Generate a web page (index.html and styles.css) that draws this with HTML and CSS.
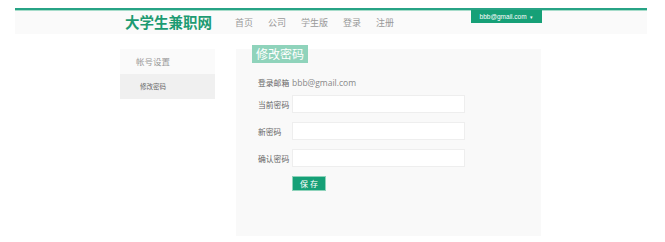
FILE: index.html
```html
<!DOCTYPE html>
<html lang="zh-CN">
  <head>
    <meta charset="utf-8">
    <title>修改密码 - 大学生兼职网</title>
    <link rel="stylesheet" href="styles.css">
  </head>
  <body>
    <div class="header">
      <a class="logo" href="#">大学生兼职网</a>
      <ul class="nav">
        <li><a href="#">首页</a></li>
        <li><a href="#">公司</a></li>
        <li><a href="#">学生版</a></li>
        <li><a href="#">登录</a></li>
        <li><a href="#">注册</a></li>
      </ul>
      <a class="user-btn" href="#">bbb@gmail.com <span class="caret">▾</span></a>
    </div>

    <div class="content">
      <div class="sidebar">
        <div class="side-title">帐号设置</div>
        <a class="side-item active" href="#">修改密码</a>
      </div>

      <div class="panel">
        <div class="panel-tab">修改密码</div>
        <form class="pw-form">
          <div class="form-row first">
            <label>登录邮箱</label>
            <span class="value">bbb@gmail.com</span>
          </div>
          <div class="form-row">
            <label>当前密码</label>
            <input type="password" class="form-control">
          </div>
          <div class="form-row">
            <label>新密码</label>
            <input type="password" class="form-control">
          </div>
          <div class="form-row">
            <label>确认密码</label>
            <input type="password" class="form-control">
          </div>
          <div class="form-row">
            <label></label>
            <button type="submit" class="btn-save">保 存</button>
          </div>
        </form>
      </div>
    </div>
  </body>
</html>
```

FILE: styles.css
```css
body {
  margin: 0;
  background: #fff;
  font-family: "Noto Sans CJK SC", "Noto Sans", sans-serif;
  color: #666;
}
a {
  text-decoration: none;
}
.header {
  display: flex;
  align-items: center;
  height: 24px;
  margin: 8px 18px 0 15px;
  border-top: 2px solid #27a385;
  box-shadow: inset 0 1px 0 #a6dcca;
  background: #fafafa;
}
.logo {
  margin-left: 110px;
  font-size: 14.5px;
  font-weight: bold;
  line-height: 1;
  color: #1d9b72;
}
.nav {
  display: flex;
  list-style: none;
  margin: 0 0 0 23px;
  padding: 0;
  gap: 15px;
  font-size: 9px;
  line-height: 1;
}
.nav a {
  color: #999;
}
.user-btn {
  align-self: flex-start;
  margin-left: auto;
  margin-right: 105px;
  width: 71px;
  height: 13px;
  line-height: 13px;
  text-align: center;
  font-family: "Liberation Sans", sans-serif;
  font-size: 6.5px;
  color: #fff;
  background: #16a077;
}
.caret {
  font-size: 5px;
  margin-left: 2px;
}
.content {
  display: flex;
  align-items: flex-start;
  margin: 15px 0 0 120px;
}
.sidebar {
  width: 95px;
  background: #fafafa;
}
.side-title {
  height: 25px;
  line-height: 25px;
  padding-left: 16px;
  font-size: 8.5px;
  color: #999;
}
.side-item {
  display: block;
  height: 25px;
  line-height: 25px;
  padding-left: 20px;
  font-size: 6.5px;
  color: #666;
}
.side-item.active {
  background: #f0f0f0;
}
.panel {
  width: 305px;
  height: 187px;
  margin-left: 21px;
  background: #f9f9f9;
}
.panel-tab {
  width: 56px;
  height: 18px;
  margin: -4px 0 0 16px;
  line-height: 18px;
  text-align: center;
  font-size: 12px;
  color: #fff;
  background: #8fd3bb;
}
.pw-form {
  padding: 10px 0 0 22px;
}
.form-row {
  display: flex;
  align-items: center;
  margin-top: 9px;
}
.form-row.first {
  margin-top: 0;
  height: 18px;
  margin-bottom: -5px;
}
.form-row label {
  width: 34px;
  font-size: 7.8px;
  color: #666;
}
.value {
  font-family: "Open Sans", sans-serif;
  font-size: 8.5px;
  color: #888;
}
.form-control {
  box-sizing: border-box;
  width: 173px;
  height: 18px;
  border: 1px solid #eee;
  background: #fff;
  padding: 0 4px;
}
.btn-save {
  width: 34px;
  height: 15px;
  padding: 0;
  border: 1px solid #8fd3bb;
  font-family: "Noto Sans CJK SC", sans-serif;
  font-size: 8px;
  line-height: 13px;
  color: #fff;
  background: #16a077;
}
```
